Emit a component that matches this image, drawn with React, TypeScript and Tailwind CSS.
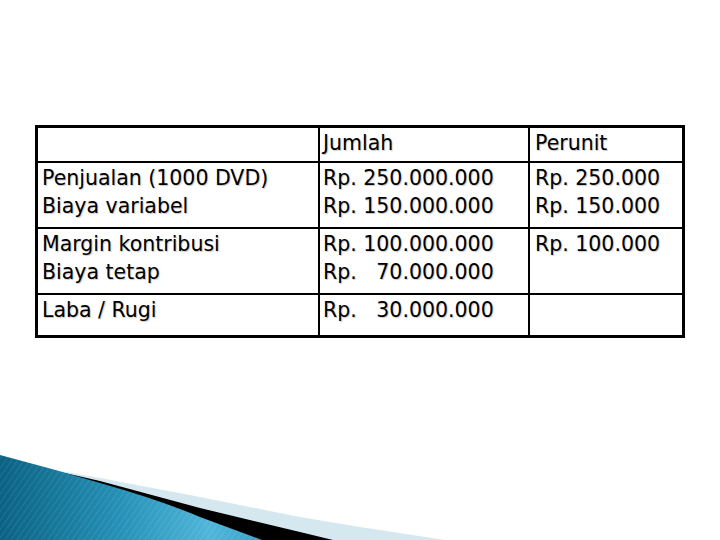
const rows = [
  { label: ["Penjualan (1000 DVD)", "Biaya variabel"], total: ["Rp. 250.000.000", "Rp. 150.000.000"], unit: ["Rp. 250.000", "Rp. 150.000"], h: "h-[66px]" },
  { label: ["Margin kontribusi", "Biaya tetap"], total: ["Rp. 100.000.000", "Rp.   70.000.000"], unit: ["Rp. 100.000"], h: "h-[66px]" },
  { label: ["Laba / Rugi"], total: ["Rp.   30.000.000"], unit: [], h: "h-[40px]" },
];

const cellText = "whitespace-pre text-[20.5px] leading-[28px] text-black [text-shadow:1px_1px_1px_rgba(0,0,0,0.22)]";

function Swoosh() {
  return (
    <svg className="absolute bottom-0 left-0" width="450" height="90" viewBox="0 0 450 90">
      <defs>
        <linearGradient id="blue" x1="0" y1="0" x2="1" y2="0">
          <stop offset="0" stopColor="#0a6283" />
          <stop offset="0.45" stopColor="#2590b6" />
          <stop offset="0.8" stopColor="#4fb6da" />
          <stop offset="1" stopColor="#3aa3c8" />
        </linearGradient>
        <pattern id="stripes" width="5" height="5" patternUnits="userSpaceOnUse" patternTransform="rotate(35)">
          <line x1="0" y1="0" x2="0" y2="5" stroke="#ffffff" strokeOpacity="0.12" strokeWidth="1.5" />
        </pattern>
      </defs>
      <path d="M55 20 L100 28 L200 47 L300 67 L360 77 L445 90 L0 90 Z" fill="#d6e8ef" />
      <path d="M33 16 Q70 24 100 31 L200 58 L300 82 L333 90 L0 90 Z" fill="#000000" />
      <path d="M0 5 Q50 18 100 33 Q160 50 200 67 Q235 80 262 90 L0 90 Z" fill="url(#blue)" />
      <path d="M0 5 Q50 18 100 33 Q160 50 200 67 Q235 80 262 90 L0 90 Z" fill="url(#stripes)" />
    </svg>
  );
}

export default function App() {
  return (
    <div className="relative h-[540px] w-[720px] overflow-hidden bg-white font-['DejaVu_Sans',Verdana,sans-serif]">
      <div className="pl-[35px] pt-[125px]">
        <div className="w-[650px] border-[3px] border-black">
          <div className="flex h-[35px] border-b-2 border-black">
            <div className="w-[282px] border-r-2 border-black" />
            <div className="w-[210px] border-r-2 border-black pl-[3px] pt-px">
              <p className={cellText}>Jumlah</p>
            </div>
            <div className="flex-1 pl-[5px] pt-px">
              <p className={cellText}>Perunit</p>
            </div>
          </div>
          {rows.map((row, i) => (
            <div key={i} className={`flex ${row.h} ${i < rows.length - 1 ? "border-b-2 border-black" : ""}`}>
              <div className="w-[282px] border-r-2 border-black pl-[4px] pt-px">
                {row.label.map((t) => (
                  <p key={t} className={cellText}>{t}</p>
                ))}
              </div>
              <div className="w-[210px] border-r-2 border-black pl-[3px] pt-px">
                {row.total.map((t) => (
                  <p key={t} className={cellText}>{t}</p>
                ))}
              </div>
              <div className="flex-1 pl-[5px] pt-px">
                {row.unit.map((t) => (
                  <p key={t} className={cellText}>{t}</p>
                ))}
              </div>
            </div>
          ))}
        </div>
      </div>
      <Swoosh />
    </div>
  );
}
